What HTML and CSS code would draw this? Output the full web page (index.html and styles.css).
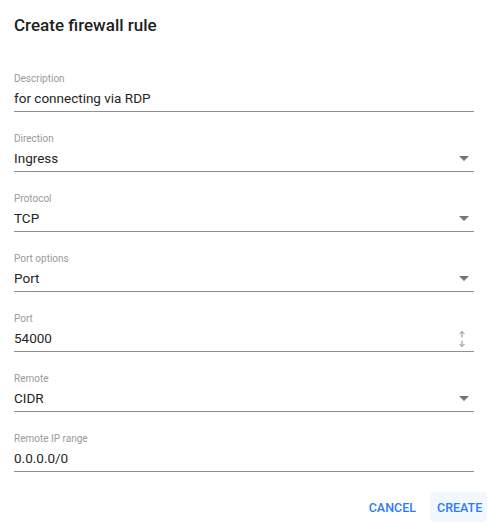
FILE: index.html
```html
<!DOCTYPE html>
<html>
<head>
<meta charset="utf-8">
<link rel="stylesheet" href="styles.css">
</head>
<body>
<div class="dialog">
  <h1 class="title">Create firewall rule</h1>
  <div class="fields">
    <div class="field">
      <div class="label">Description</div>
      <div class="control"><span class="value">for connecting via RDP</span></div>
    </div>
    <div class="field">
      <div class="label">Direction</div>
      <div class="control"><span class="value">Ingress</span>
        <svg class="caret" width="10" height="5" viewBox="0 0 10 5"><path d="M0 0h10L5 5z" fill="#757575"/></svg>
      </div>
    </div>
    <div class="field">
      <div class="label">Protocol</div>
      <div class="control"><span class="value">TCP</span>
        <svg class="caret" width="10" height="5" viewBox="0 0 10 5"><path d="M0 0h10L5 5z" fill="#757575"/></svg>
      </div>
    </div>
    <div class="field">
      <div class="label">Port options</div>
      <div class="control"><span class="value">Port</span>
        <svg class="caret" width="10" height="5" viewBox="0 0 10 5"><path d="M0 0h10L5 5z" fill="#757575"/></svg>
      </div>
    </div>
    <div class="field">
      <div class="label">Port</div>
      <div class="control"><span class="value">54000</span>
        <svg class="spin" width="10" height="18" viewBox="0 0 10 18" fill="none" stroke="#8a8a8a" stroke-width="1">
          <path d="M5 1.5v6M2.5 4l2.5-2.5 2.5 2.5"/>
          <path d="M5 10.5v6M2.5 14l2.5 2.5 2.5-2.5"/>
        </svg>
      </div>
    </div>
    <div class="field">
      <div class="label">Remote</div>
      <div class="control"><span class="value">CIDR</span>
        <svg class="caret" width="10" height="5" viewBox="0 0 10 5"><path d="M0 0h10L5 5z" fill="#757575"/></svg>
      </div>
    </div>
    <div class="field">
      <div class="label">Remote IP range</div>
      <div class="control"><span class="value">0.0.0.0/0</span></div>
    </div>
  </div>
  <div class="actions">
    <button class="btn">CANCEL</button>
    <button class="btn btn-primary">CREATE</button>
  </div>
</div>
</body>
</html>
```
FILE: styles.css
```css
html, body {
  margin: 0;
  padding: 0;
  background: #ffffff;
}
body {
  font-family: Roboto, "Liberation Sans", sans-serif;
  color: #212121;
}
.dialog {
  width: 490px;
  height: 525px;
  box-sizing: border-box;
  padding: 15px 3px 0 14px;
  display: flex;
  flex-direction: column;
}
.title {
  margin: 0 0 38px 0;
  font-size: 17px;
  line-height: 20px;
  font-weight: 500;
  color: #1f1f1f;
}
.fields {
  display: flex;
  flex-direction: column;
  gap: 21px;
  padding-right: 13px;
}
.field {
  display: flex;
  flex-direction: column;
  gap: 3px;
}
.label {
  font-size: 10px;
  line-height: 12px;
  color: #9a9a9a;
}
.control {
  display: flex;
  align-items: center;
  justify-content: space-between;
  height: 20px;
  padding-bottom: 3px;
  border-bottom: 1px solid #8f8f8f;
}
.value {
  font-size: 13.5px;
  line-height: 20px;
  color: #262626;
}
.caret {
  margin-right: 5px;
}
.spin {
  margin-right: 7px;
  margin-top: 2px;
}
.actions {
  display: flex;
  justify-content: flex-end;
  margin-top: 20px;
}
.btn {
  font-family: Roboto, "Liberation Sans", sans-serif;
  font-size: 12.5px;
  font-weight: 500;
  color: #2f7bf5;
  background: transparent;
  border: none;
  border-radius: 4px;
  height: 30px;
  padding: 0 14px;
  cursor: pointer;
}
.btn-primary {
  background: #f3f8ff;
  padding: 0 7px;
  width: 57px;
}
```
